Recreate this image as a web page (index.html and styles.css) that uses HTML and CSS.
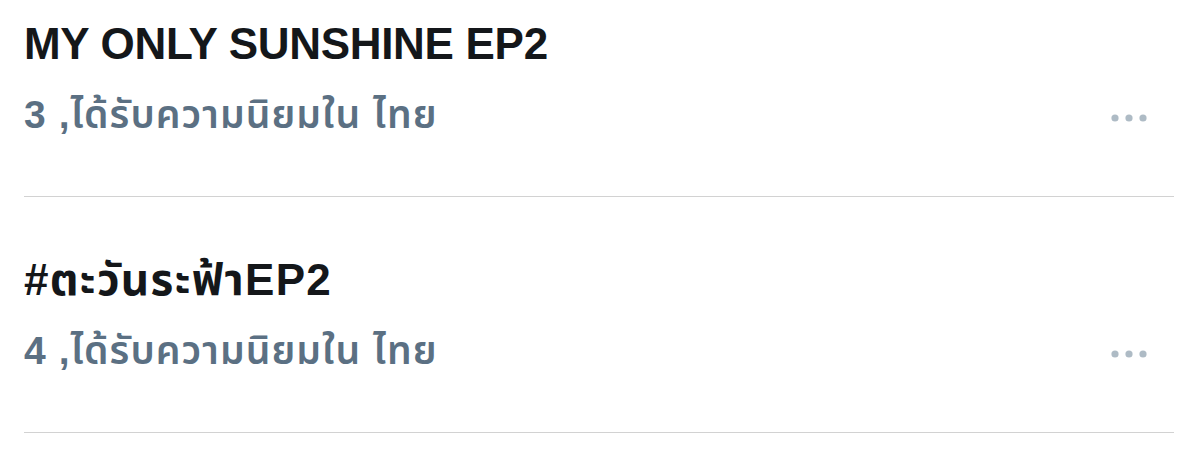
FILE: index.html
```html
<!DOCTYPE html>
<html lang="th">
<head>
    <meta charset="UTF-8">
    <meta name="viewport" content="width=device-width, initial-scale=1.0">
    <title>Trends</title>
    <link rel="stylesheet" href="styles.css">
</head>
<body>
    <div class="trends">
        <div class="trend">
            <div class="trend-name latin">MY ONLY SUNSHINE EP2</div>
            <div class="trend-meta">
                <span class="trend-rank">3 ,ได้รับความนิยมใน ไทย</span>
                <button class="more" aria-label="More">
                    <svg width="36" height="8" viewBox="0 0 36 8">
                        <circle cx="4" cy="4" r="3.6"/>
                        <circle cx="18" cy="4" r="3.6"/>
                        <circle cx="32" cy="4" r="3.6"/>
                    </svg>
                </button>
            </div>
        </div>
        <div class="trend">
            <div class="trend-name thai">#ตะวันระฟ้าEP2</div>
            <div class="trend-meta">
                <span class="trend-rank">4 ,ได้รับความนิยมใน ไทย</span>
                <button class="more" aria-label="More">
                    <svg width="36" height="8" viewBox="0 0 36 8">
                        <circle cx="4" cy="4" r="3.6"/>
                        <circle cx="18" cy="4" r="3.6"/>
                        <circle cx="32" cy="4" r="3.6"/>
                    </svg>
                </button>
            </div>
        </div>
    </div>
</body>
</html>
```

FILE: styles.css
```css
body {
    margin: 0;
    background: #ffffff;
    font-family: "Liberation Sans", "Noto Sans Thai", "Noto Sans", sans-serif;
    overflow: hidden;
}
.trends {
    margin: -39px 26px 0 24px;
}
.trend {
    padding: 57px 0 57px;
    border-bottom: 1px solid #d2d2d2;
}
.trend-name {
    font-size: 44px;
    line-height: 52px;
    font-weight: bold;
    color: #14171a;
}
.trend-name.latin {
    letter-spacing: -0.3px;
}
.trend-name.thai {
    letter-spacing: 1.3px;
}
.trend-meta {
    display: flex;
    align-items: center;
    justify-content: space-between;
    margin-top: 21px;
}
.trend-rank {
    font-size: 39px;
    line-height: 48px;
    font-weight: 600;
    letter-spacing: 1.05px;
    color: #5b7083;
}
.more {
    border: none;
    background: none;
    padding: 0;
    margin: 6px 27px 0 0;
    display: flex;
    fill: #aebbc5;
}
```
